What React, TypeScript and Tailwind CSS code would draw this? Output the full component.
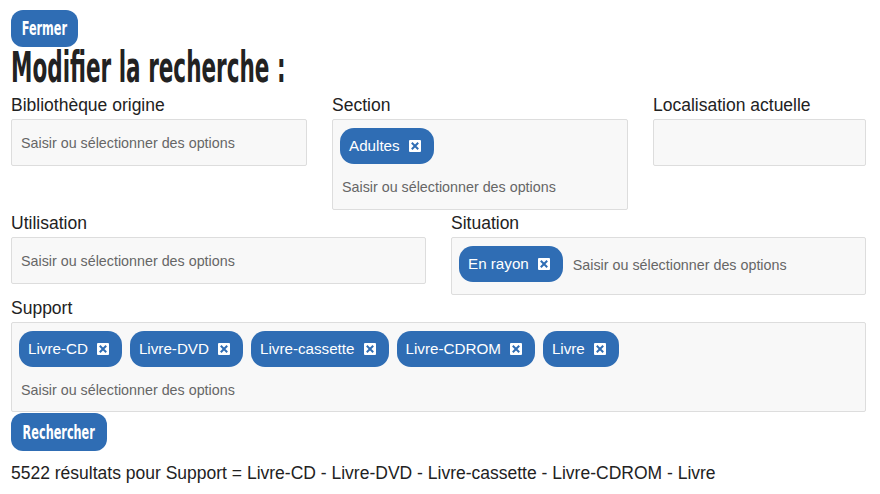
import React from 'react';

const PLACEHOLDER = 'Saisir ou sélectionner des options';

const Chip = ({ label }: { label: string }) => (
    <span className="inline-flex items-center h-[36px] pl-[9px] pr-[13px] rounded-[14px] bg-[#2f6db4] text-white text-[15.2px] leading-none">
        {label}
        <span className="ml-[9px] w-[12px] h-[12px] bg-white rounded-[1px] flex items-center justify-center">
            <svg width="8" height="8" viewBox="0 0 8 8">
                <path d="M1.5 1.5 L6.5 6.5 M6.5 1.5 L1.5 6.5" stroke="#2f6db4" strokeWidth="2" strokeLinecap="square" />
            </svg>
        </span>
    </span>
);

const Placeholder = () => <span className="block text-[14.3px] text-[#666] leading-[22px]">{PLACEHOLDER}</span>;

// empty multi-select box
const EmptyBox = ({ placeholder = true }: { placeholder?: boolean }) => (
    <div className="h-[47px] border border-[#ddd] rounded-[2px] bg-[#f8f8f8] flex items-center pl-[9px]">
        {placeholder && <Placeholder />}
    </div>
);

// chips stacked above the placeholder line
const StackBox = ({ chips, pb = 'pb-[10px]' }: { chips: string[]; pb?: string }) => (
    <div className={`border border-[#ddd] rounded-[2px] bg-[#f8f8f8] pt-[8px] ${pb} pl-[7px]`}>
        <div className="flex flex-wrap gap-[8px]">
            {chips.map((c) => (
                <Chip key={c} label={c} />
            ))}
        </div>
        <div className="mt-[12px] pl-[2px]">
            <Placeholder />
        </div>
    </div>
);

const Label = ({ children }: { children: React.ReactNode }) => (
    <div className="text-[17.5px] leading-[20px] mb-[4px] text-[#222]">{children}</div>
);

const condensed = { fontFamily: '"DejaVu Sans Condensed", "DejaVu Sans", sans-serif' };

const BlueButton = ({ label, w, h, mt }: { label: string; w: string; h: string; mt: string }) => (
    <button
        style={condensed}
        className={`${w} ${h} ${mt} block rounded-[12px] bg-[#2f6db4] text-white text-[19px] font-bold flex items-center justify-center overflow-hidden`}
    >
        <span className="inline-block scale-x-[0.66] whitespace-nowrap">{label}</span>
    </button>
);

export default function App() {
    return (
        <div className="w-[880px] h-[494px] bg-white px-[11px] pt-[10px] font-['Liberation_Sans',Arial,sans-serif]">
            {/* Close button */}
            <BlueButton label="Fermer" w="w-[67px]" h="h-[37px]" mt="mt-0" />
            <h1 style={condensed} className="-mt-[3px] mb-[3px] h-[48px] text-[42px] leading-[48px] font-bold text-[#222] whitespace-nowrap">
                <span className="inline-block origin-left scale-x-[0.57]">Modifier la recherche :</span>
            </h1>

            {/* Row 1 */}
            <div className="grid grid-cols-[296px_296px_213px] gap-x-[25px] items-start">
                <div>
                    <Label>Bibliothèque origine</Label>
                    <EmptyBox />
                </div>
                <div>
                    <Label>Section</Label>
                    <StackBox chips={['Adultes']} pb="pb-[11px]" />
                </div>
                <div>
                    <Label>Localisation actuelle</Label>
                    <EmptyBox placeholder={false} />
                </div>
            </div>

            {/* Row 2 */}
            <div className="mt-[3px] grid grid-cols-[415px_415px] gap-x-[25px] items-start">
                <div>
                    <Label>Utilisation</Label>
                    <EmptyBox />
                </div>
                <div>
                    <Label>Situation</Label>
                    <div className="h-[58px] border border-[#ddd] rounded-[2px] bg-[#f8f8f8] pt-[8px] pl-[7px] flex items-start">
                        <Chip label="En rayon" />
                        <span className="ml-[10px] mt-[8px]">
                            <Placeholder />
                        </span>
                    </div>
                </div>
            </div>

            {/* Support */}
            <div className="mt-[3px] w-[855px]">
                <Label>Support</Label>
                <StackBox chips={['Livre-CD', 'Livre-DVD', 'Livre-cassette', 'Livre-CDROM', 'Livre']} />
            </div>

            <BlueButton label="Rechercher" w="w-[96px]" h="h-[38px]" mt="mt-[1px]" />

            <p className="mt-[11px] text-[17.5px] leading-[23px] text-[#222]">
                5522 résultats pour Support = Livre-CD - Livre-DVD - Livre-cassette - Livre-CDROM - Livre
            </p>
        </div>
    );
}
